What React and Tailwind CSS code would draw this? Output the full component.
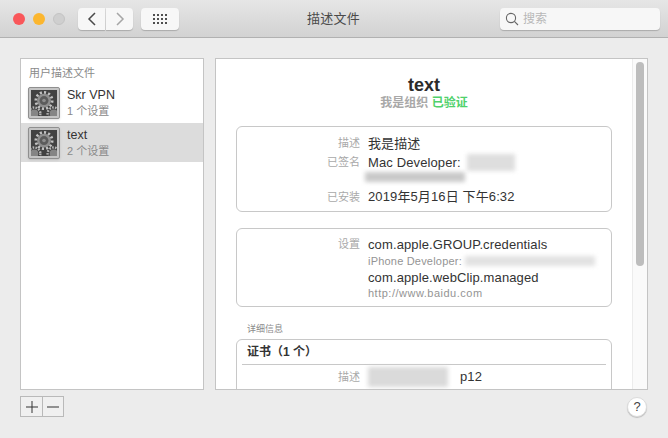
import React from "react";

const font = "font-['Liberation_Sans','Noto_Sans_CJK_SC',sans-serif]";

const GearIcon = () => (
  <div className="w-[32px] h-[32px] rounded-[2px] border border-[#8f8f8f] bg-[#c4c4c4] p-[2px] shadow-sm shrink-0">
    <svg viewBox="0 0 32 32" className="w-full h-full">
      <rect width="32" height="32" fill="#424242" />
      <circle cx="16" cy="13" r="10" fill="none" stroke="#c2c2c2" strokeWidth="3.5" strokeDasharray="2.6 2.6" />
      <circle cx="16" cy="13" r="8.5" fill="#8f8f8f" />
      <circle cx="16" cy="13" r="5.5" fill="#5c5c5c" />
      <circle cx="16" cy="13" r="2.2" fill="#8f8f8f" />
      <circle cx="4" cy="29" r="7.5" fill="none" stroke="#b5b5b5" strokeWidth="3" strokeDasharray="2 1.6" />
      <circle cx="28" cy="29" r="7.5" fill="none" stroke="#b5b5b5" strokeWidth="3" strokeDasharray="2 1.6" />
      <circle cx="4" cy="29" r="5" fill="#858585" />
      <circle cx="28" cy="29" r="5" fill="#858585" />
    </svg>
  </div>
);

const ProfileRow = ({ name, count, selected, className }) => (
  <div className={`flex items-center gap-[7px] h-[39px] pl-[7px] ${selected ? "bg-[#dcdcdc]" : ""} ${className}`}>
    <GearIcon />
    <div className="flex flex-col">
      <span className="text-[12.5px] leading-[16px] text-[#333]">{name}</span>
      <span className="text-[11px] leading-[16px] text-[#8a8a8a]">{count}</span>
    </div>
  </div>
);

const Blur = ({ className }) => <span className={`block blur-[2px] ${className}`} />;

const InfoRow = ({ label, className, children }) => (
  <div className={`flex ${className}`}>
    <span className="w-[123px] text-right text-[11px] text-[#a9a9a9] shrink-0">{label}</span>
    <div className="ml-[8px] text-[13px] tracking-[0.12px] text-[#333] min-w-0 flex-1">{children}</div>
  </div>
);

export default function App() {
  return (
    <div className={`w-[668px] h-[438px] bg-[#ececec] flex flex-col overflow-hidden ${font}`}>
      {/* Toolbar */}
      <div className="h-[38px] shrink-0 flex items-center bg-gradient-to-b from-[#e6e6e6] to-[#d2d2d2] border-b border-[#b1b1b1]">
        <div className="flex items-center gap-[8px] ml-[13px]">
          <span className="w-[12px] h-[12px] rounded-full bg-[#f9575a]" />
          <span className="w-[12px] h-[12px] rounded-full bg-[#fbb62f]" />
          <span className="w-[12px] h-[12px] rounded-full bg-[#cfcfcf] border border-[#c4c4c4]" />
        </div>
        <div className="flex ml-[13px] gap-[1px]">
          <div className="w-[27px] h-[22px] rounded-l-[4px] bg-[#f7f7f7] shadow-[0_1px_1px_rgba(0,0,0,0.2)] flex items-center justify-center">
            <svg width="10" height="14" viewBox="0 0 10 14" fill="none" stroke="#4a4a4a" strokeWidth="1.5"><path d="M8 1L2 7l6 6" /></svg>
          </div>
          <div className="w-[27px] h-[22px] rounded-r-[4px] bg-[#f7f7f7] shadow-[0_1px_1px_rgba(0,0,0,0.2)] flex items-center justify-center">
            <svg width="10" height="14" viewBox="0 0 10 14" fill="none" stroke="#a6a6a6" strokeWidth="1.5"><path d="M2 1l6 6-6 6" /></svg>
          </div>
        </div>
        <div className="w-[38px] h-[22px] ml-[8px] rounded-[4px] bg-[#f7f7f7] shadow-[0_1px_1px_rgba(0,0,0,0.2)] flex items-center justify-center">
          <div className="grid grid-cols-4 gap-[2px]">
            {Array.from({ length: 12 }).map((_, i) => (
              <span key={i} className="w-[2px] h-[2px] bg-[#4f4f4f]" />
            ))}
          </div>
        </div>
        <span className="ml-[128px] w-[53px] text-center text-[13px] tracking-[0.2px] text-[#4a4a4a] whitespace-nowrap">描述文件</span>
        <div className="ml-auto mr-[8px] w-[160px] h-[22px] rounded-[4px] bg-[#f7f7f7] shadow-[0_1px_1px_rgba(0,0,0,0.2)] flex items-center pl-[5px] gap-[4px]">
          <svg width="14" height="14" viewBox="0 0 14 14" fill="none" stroke="#666" strokeWidth="1.1"><circle cx="6" cy="6" r="4.6" /><path d="M9.4 9.4L13 13" /></svg>
          <span className="text-[12px] text-[#b8b8b8]">搜索</span>
        </div>
      </div>

      {/* Panels */}
      <div className="flex mt-[20px] ml-[20px] gap-[11px] h-[332px] shrink-0">
        <div className="w-[184px] bg-white border border-[#c4c4c4] flex flex-col">
          <div className="h-[25px] flex items-end pl-[8px] pb-[3px] text-[11px] text-[#8a8a8a]">用户描述文件</div>
          <ProfileRow name="Skr VPN" count="1 个设置" className="pb-[2px]" />
          <ProfileRow name="text" count="2 个设置" selected />
        </div>

        <div className="w-[433px] bg-white border border-[#c4c4c4] flex overflow-hidden">
          <div className="w-[416px] shrink-0 px-[20px] overflow-hidden">
            <div className="text-center mt-[15px] text-[18px] leading-[22px] font-bold text-[#2b2b2b]">text</div>
            <div className="text-center text-[12px] leading-[14px] font-bold text-[#a8a8a8]">
              我是组织 <span className="text-[#4fd16b]">已验证</span>
            </div>

            <div className="mt-[16px] h-[86px] rounded-[6px] border border-[#c8c8c8] pt-[7px]">
              <InfoRow label="描述" className="h-[19px] items-center">我是描述</InfoRow>
              <InfoRow label="已签名" className="h-[19px] items-center">
                <div className="flex items-center">
                  <span>Mac Developer:</span>
                  <Blur className="w-[48px] h-[17px] ml-[6px] bg-[#dedede]" />
                </div>
              </InfoRow>
              <div className="h-[14px] pl-[128px]">
                <Blur className="w-[100px] h-[10px] bg-[#c9c9c9]" />
              </div>
              <InfoRow label="已安装" className="h-[22px] items-center">2019年5月16日 下午6:32</InfoRow>
            </div>

            <div className="mt-[16px] h-[79px] rounded-[6px] border border-[#c8c8c8] pt-[7px]">
              <InfoRow label="设置" className="items-start">
                <div className="leading-[18px]">com.apple.GROUP.credentials</div>
                <div className="flex items-center text-[11px] leading-[14px] text-[#949494] tracking-[0.2px] whitespace-nowrap">
                  iPhone Developer:
                  <Blur className="w-[130px] h-[10px] ml-[3px] bg-[#e2e2e2]" />
                </div>
                <div className="leading-[18px] mt-[1px]">com.apple.webClip.managed</div>
                <div className="text-[11px] leading-[13px] text-[#949494] tracking-[0.5px]">http://www.baidu.com</div>
              </InfoRow>
            </div>

            <div className="mt-[16px] ml-[11px] text-[9px] leading-[12px] text-[#8a8a8a]">详细信息</div>
            <div className="mt-[4px] h-[80px] rounded-[6px] border border-[#c8c8c8] px-[5px]">
              <div className="h-[25px] border-b border-[#c8c8c8] flex items-center pl-[5px] text-[12px] font-bold text-[#333]">证书（1 个）</div>
              <InfoRow label="描述" className="-ml-[5px] mt-[2px] items-center">
                <div className="flex items-center">
                  <Blur className="w-[80px] h-[20px] bg-[#dadada]" />
                  <span className="ml-[12px]">p12</span>
                </div>
              </InfoRow>
            </div>
          </div>

          {/* Scrollbar */}
          <div className="w-[15px] border-l border-[#ececec] bg-[#fafafa] pt-[3px] pl-[3px]">
            <div className="w-[8px] h-[204px] rounded-full bg-[#bdbdbd]" />
          </div>
        </div>
      </div>

      {/* Bottom bar */}
      <div className="flex items-start ml-[20px] mt-[6px] w-[627px]">
        <div className="flex border border-[#b9b9b9] bg-[#f0f0f0] h-[21px]">
          <div className="w-[22px] flex items-center justify-center border-r border-[#b9b9b9]">
            <svg width="12" height="12" viewBox="0 0 12 12" stroke="#333" strokeWidth="1"><path d="M6 0v12M0 6h12" /></svg>
          </div>
          <div className="w-[20px] flex items-center justify-center">
            <svg width="12" height="12" viewBox="0 0 12 12" stroke="#333" strokeWidth="1"><path d="M0 6h12" /></svg>
          </div>
        </div>
        <div className="ml-auto w-[20px] h-[20px] mt-[1px] rounded-full bg-white border border-[#dcdcdc] shadow-[0_1px_1px_rgba(0,0,0,0.2)] flex items-center justify-center text-[13px] text-[#444]">?</div>
      </div>
    </div>
  );
}
